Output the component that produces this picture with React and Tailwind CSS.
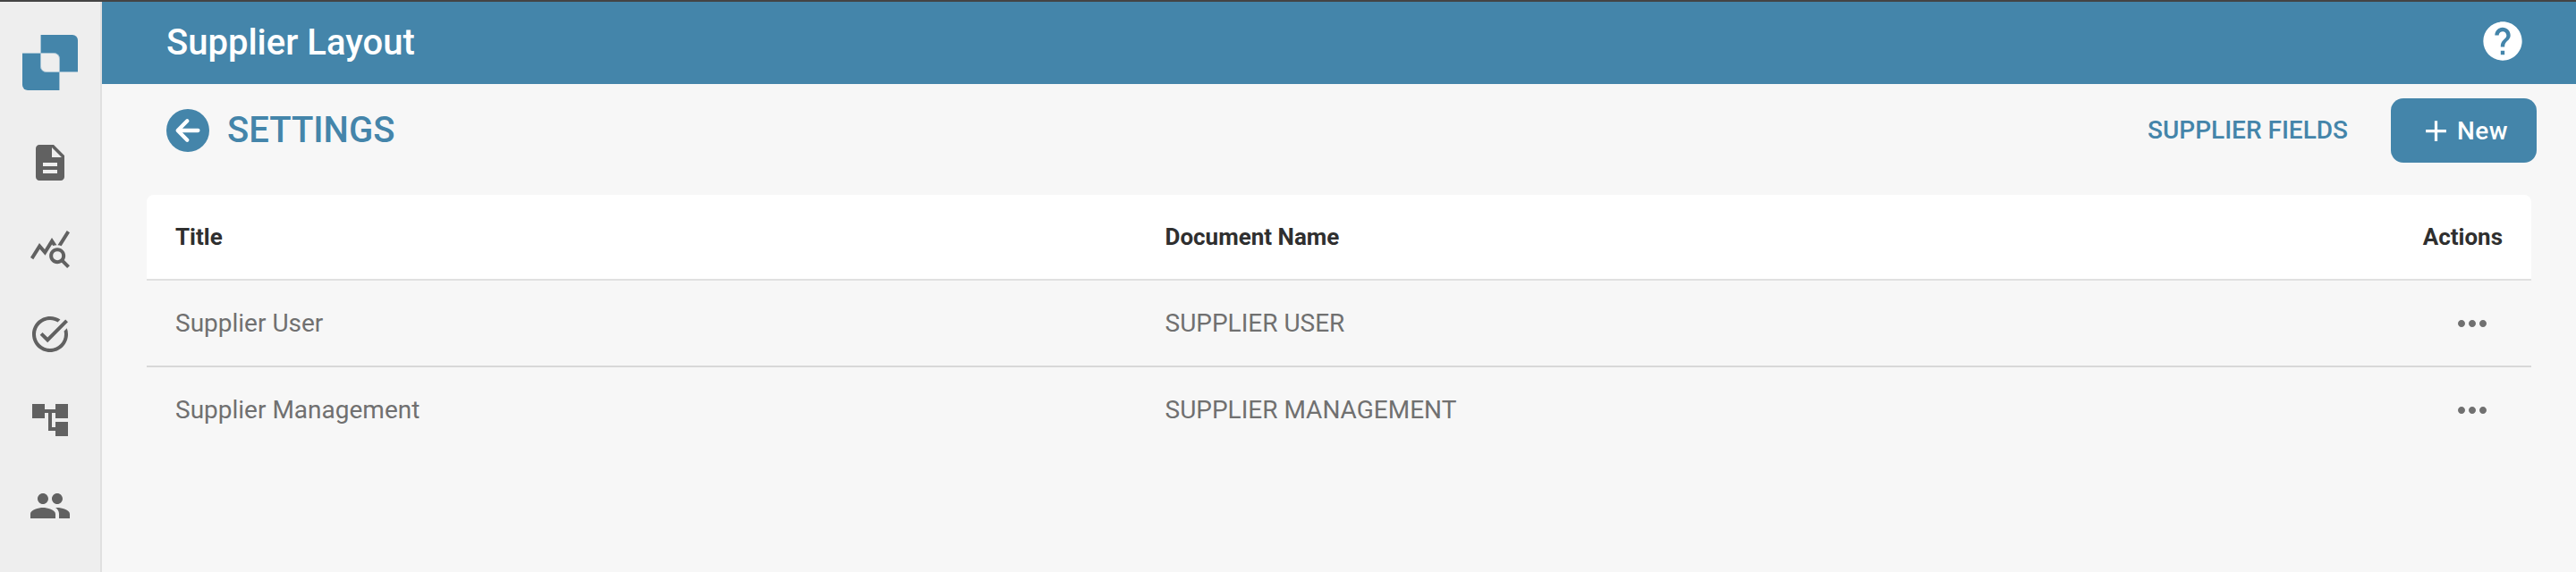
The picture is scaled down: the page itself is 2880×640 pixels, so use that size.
import { MdDescription, MdQueryStats, MdTaskAlt, MdAccountTree, MdPeople, MdHelp, MdAdd, MdMoreHoriz } from "react-icons/md";

const navIcons = [MdDescription, MdQueryStats, MdTaskAlt, MdAccountTree, MdPeople];

const rows = [
  { title: "Supplier User", doc: "SUPPLIER USER" },
  { title: "Supplier Management", doc: "SUPPLIER MANAGEMENT" },
];

function Logo() {
  return (
    <svg className="ml-[25px] mt-[37px] size-[62px]" viewBox="0 0 62 62">
      <path d="M20.5 0H56a6 6 0 0 1 6 6V41.5H20.5Z" fill="#4485aa" />
      <path d="M0 20.5H41.5V62H6a6 6 0 0 1-6-6Z" fill="#4485aa" />
      <path d="M20.5 20.5H35.5a6 6 0 0 1 6 6V41.5H26.5a6 6 0 0 1-6-6Z" fill="#eeeeee" />
      <path d="M20.5 0V20.5M0 20.5H35.5a6 6 0 0 1 6 6V62M62 41.5H26.5a6 6 0 0 1-6-6V20.5" fill="none" stroke="#a5c3d5" strokeWidth="1" />
    </svg>
  );
}

function BackIcon() {
  return (
    <svg className="size-12" viewBox="0 0 48 48">
      <circle cx="24" cy="24" r="24" fill="#4485aa" />
      <path d="M23.3 13.3L12.7 24L23.3 34.7M13.2 24H35.4" fill="none" stroke="#fff" strokeWidth="4.3" strokeLinecap="round" strokeLinejoin="round" />
    </svg>
  );
}

export default function App() {
  return (
    <div className="flex h-[640px] w-[2880px] flex-col overflow-hidden border-t-2 border-[#444444] bg-[#f7f7f7] font-['Roboto',sans-serif]">
      <div className="flex min-h-0 flex-1">
        <aside className="flex w-[114px] shrink-0 flex-col border-r-2 border-[#e0e0e0] bg-[#eeeeee]">
          <Logo />
          <nav className="mt-[57px] flex flex-col items-center gap-12 text-[#616161]">
            {navIcons.map((Icon, i) => (
              <Icon key={i} className="size-12" />
            ))}
          </nav>
        </aside>
        <main className="flex min-w-0 flex-1 flex-col">
          <header className="flex h-[92px] shrink-0 items-center justify-between bg-[#4485aa] pl-[72px] pr-[56px] text-white">
            <h1 className="text-[40px] leading-[46px] font-medium">Supplier Layout</h1>
            <MdHelp className="mb-1 size-[52px]" />
          </header>
          <div className="flex h-[124px] shrink-0 items-start justify-between pt-4 pl-[72px] pr-[44px]">
            <div className="flex h-[72px] items-center gap-5 text-[#4485aa]">
              <BackIcon />
              <h2 className="text-[40px] leading-[46px] font-medium">SETTINGS</h2>
            </div>
            <div className="flex items-center gap-[48px]">
              <a className="text-[28px] leading-8 font-medium text-[#4485aa]">SUPPLIER FIELDS</a>
              <button className="flex h-[72px] w-[163px] items-center rounded-[14px] bg-[#4485aa] pl-[31px] text-[28px] leading-8 font-medium text-white">
                <MdAdd className="size-[39px]" />
                <span className="mt-[2px] ml-1 tracking-[0.4px]">New</span>
              </button>
            </div>
          </div>
          <section className="ml-[50px] flex w-[2666px] flex-col">
            <div className="flex h-24 items-center rounded-t-lg border-b-2 border-[#e0e0e0] bg-white px-8 text-[26px] leading-8 font-bold text-[#2f2f2f]">
              <span className="w-[1106.5px]">Title</span>
              <span className="flex-1">Document Name</span>
              <span>Actions</span>
            </div>
            {rows.map((row) => (
              <div key={row.doc} className="flex h-[97px] items-center border-b-2 border-[#d8d8d8] pl-8 pr-[42px] text-[28px] leading-8 text-[#707070] last:border-transparent">
                <span className="w-[1106.5px]">{row.title}</span>
                <span className="flex-1">{row.doc}</span>
                <MdMoreHoriz className="size-12" />
              </div>
            ))}
          </section>
        </main>
      </div>
    </div>
  );
}
